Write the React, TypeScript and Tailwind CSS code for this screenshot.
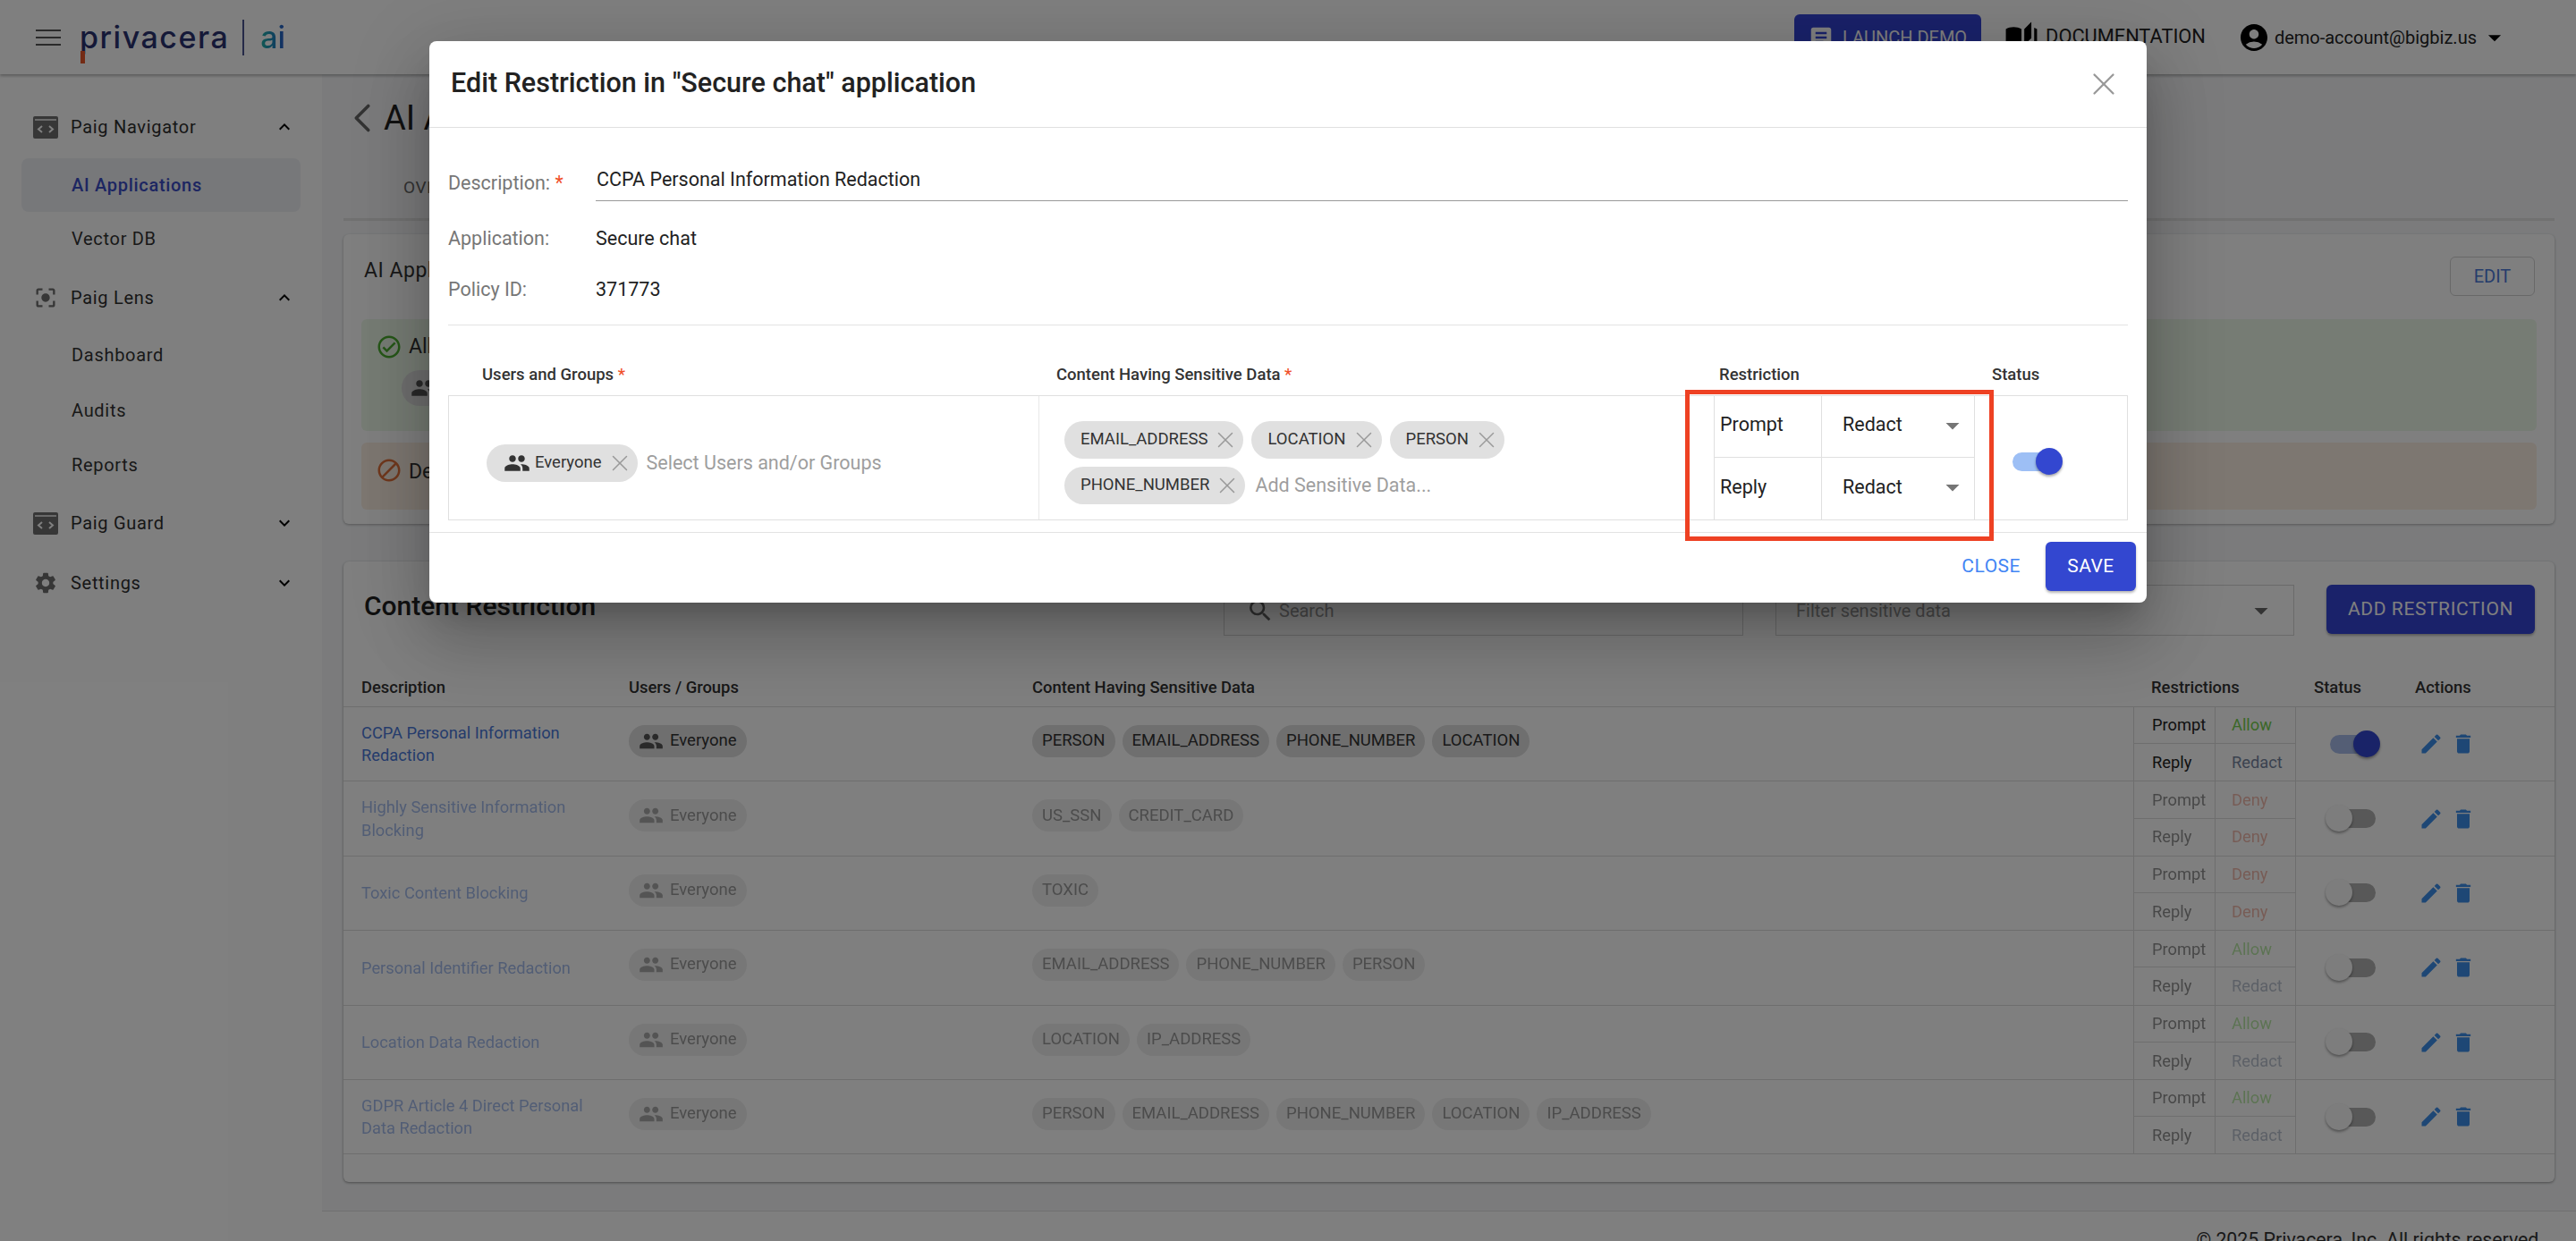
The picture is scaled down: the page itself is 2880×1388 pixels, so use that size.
import { ChevronLeft, X } from "lucide-react";
import {
  MdAccountCircle,
  MdArrowDropDown,
  MdArticle,
  MdAutoStories,
  MdBlock,
  MdCenterFocusStrong,
  MdDelete,
  MdEdit,
  MdExpandLess,
  MdExpandMore,
  MdOutlineCheckCircle,
  MdPeople,
  MdSearch,
  MdSettings,
} from "react-icons/md";

type Policy = {
  name: string[];
  tags: string[];
  prompt: string;
  reply: string;
  on?: boolean;
};

const POLICIES: Policy[] = [
  { name: ["CCPA Personal Information", "Redaction"], tags: ["PERSON", "EMAIL_ADDRESS", "PHONE_NUMBER", "LOCATION"], prompt: "Allow", reply: "Redact", on: true },
  { name: ["Highly Sensitive Information", "Blocking"], tags: ["US_SSN", "CREDIT_CARD"], prompt: "Deny", reply: "Deny" },
  { name: ["Toxic Content Blocking"], tags: ["TOXIC"], prompt: "Deny", reply: "Deny" },
  { name: ["Personal Identifier Redaction"], tags: ["EMAIL_ADDRESS", "PHONE_NUMBER", "PERSON"], prompt: "Allow", reply: "Redact" },
  { name: ["Location Data Redaction"], tags: ["LOCATION", "IP_ADDRESS"], prompt: "Allow", reply: "Redact" },
  { name: ["GDPR Article 4 Direct Personal", "Data Redaction"], tags: ["PERSON", "EMAIL_ADDRESS", "PHONE_NUMBER", "LOCATION", "IP_ADDRESS"], prompt: "Allow", reply: "Redact" },
];

function verdictColor(v: string) {
  if (v === "Allow") return "text-[#76d050]";
  if (v === "Deny") return "text-[#e0735a]";
  return "text-[#76859f]";
}

function CodeWindow() {
  return (
    <svg width="28" height="25" viewBox="0 0 28 25" className="shrink-0">
      <rect width="28" height="25" rx="2" fill="#6e6e6e" />
      <rect x="2" y="3" width="24" height="2" fill="#fff" opacity="0.7" />
      <path d="M10 11l-4 3.500 4 3.500M18 11l4 3.500-4 3.500" fill="none" stroke="#fff" strokeWidth="2" />
    </svg>
  );
}

function NavHeader({ icon, label, open }: { icon: React.ReactNode; label: string; open: boolean }) {
  return (
    <div className="flex w-full items-center pl-[37px] pr-[30px]">
      <div className="flex w-[42px] justify-start">{icon}</div>
      <span className="flex-1 text-[20px] tracking-[0.7px] text-[#2e2e2e]">{label}</span>
      {open ? <MdExpandLess size={24} className="text-black" /> : <MdExpandMore size={24} className="text-black" />}
    </div>
  );
}

function Sidebar() {
  return (
    <aside className="w-[360px] shrink-0 bg-white text-[20px] tracking-[0.7px] text-[#333]">
      <div className="h-[44px]" />
      <div className="flex h-[30px] items-center">
        <NavHeader icon={<CodeWindow />} label="Paig Navigator" open />
      </div>
      <div className="mx-[24px] mt-[20px] flex h-[60px] items-center rounded-[8px] bg-[#eff1f5] pl-[56px] font-medium text-[#3a4cc4]">AI Applications</div>
      <div className="flex h-[60px] items-center pl-[80px]">Vector DB</div>
      <div className="mt-[21px] flex h-[30px] items-center">
        <NavHeader icon={<MdCenterFocusStrong size={28} className="text-[#6e6e6e]" />} label="Paig Lens" open />
      </div>
      <div className="mt-[19px] flex h-[60px] items-center pl-[80px]">Dashboard</div>
      <div className="mt-[2px] flex h-[60px] items-center pl-[80px]">Audits</div>
      <div className="mt-[1px] flex h-[60px] items-center pl-[80px]">Reports</div>
      <div className="mt-[20px] flex h-[30px] items-center">
        <NavHeader icon={<CodeWindow />} label="Paig Guard" open={false} />
      </div>
      <div className="mt-[37px] flex h-[30px] items-center">
        <NavHeader icon={<MdSettings size={28} className="text-[#6e6e6e]" />} label="Settings" open={false} />
      </div>
    </aside>
  );
}

function TopBar() {
  return (
    <header className="relative z-10 flex h-[83px] shrink-0 items-center bg-white pl-[40px] pr-[74px] shadow-[0_2px_3px_rgba(0,0,0,0.28)]">
      <div className="flex w-[28px] flex-col gap-[6px]">
        <span className="h-[2px] bg-[#555]" />
        <span className="h-[2px] bg-[#555]" />
        <span className="h-[2px] bg-[#555]" />
      </div>
      <div className="relative ml-[21px] flex items-center">
        <span className="font-['Inter',sans-serif] text-[34px] font-medium leading-none tracking-[1.5px] text-[#2a3270]">privacera</span>
        <span className="absolute bottom-[-9px] left-[1px] h-[14px] w-[5px] bg-[#e8562a]" />
        <span className="ml-[15px] h-[40px] w-[2px] bg-[#4a5590]" />
        <span className="ml-[18px] bg-gradient-to-r from-[#25b5a5] to-[#2a55c8] bg-clip-text font-['Inter',sans-serif] text-[34px] font-medium leading-none text-transparent">ai</span>
      </div>
      <div className="ml-auto flex items-center">
        <div className="flex h-[52px] w-[209px] items-center gap-[9px] rounded-[6px] bg-[#3444d4] pl-[15px] text-[20px] text-white">
          <MdArticle size={30} className="text-white" />
          LAUNCH DEMO
        </div>
        <div className="ml-[26px] flex items-center gap-[8px] text-[21.800px] text-[#222]">
          <MdAutoStories size={38} className="text-black" />
          DOCUMENTATION
        </div>
        <div className="ml-[36px] flex items-center text-[20px] text-[#222]">
          <MdAccountCircle size={36} className="text-black" />
          <span className="ml-[5px]">demo-account@bigbiz.us</span>
          <MdArrowDropDown size={34} className="ml-[3px] text-black" />
        </div>
      </div>
    </header>
  );
}

function SmallChip({ label, people }: { label: string; people?: boolean }) {
  return (
    <span className="inline-flex h-[36px] items-center rounded-full bg-[#dedede] px-[11px] text-[18.500px] text-[#333]">
      {people ? <MdPeople size={28} className="mr-[7px] text-[#555]" /> : null}
      {label}
    </span>
  );
}

function PolicyRow({ policy }: { policy: Policy }) {
  const fade = policy.on ? "" : "opacity-50";
  return (
    <div className="grid h-[83.400px] grid-cols-[299px_451px_1251px_92px_90px_289px] border-b border-[#dcdcdc] text-[18.300px]">
      <div className={`flex flex-col justify-center pl-[20px] leading-[25.500px] text-[#4a78d8] ${fade}`}>
        {policy.name.map((line) => (
          <span key={line}>{line}</span>
        ))}
      </div>
      <div className={`pl-[20px] pt-[20px] ${fade}`}>
        <SmallChip label="Everyone" people />
      </div>
      <div className={`flex gap-[8px] pl-[20px] pt-[20px] ${fade}`}>
        {policy.tags.map((t) => (
          <SmallChip key={t} label={t} />
        ))}
      </div>
      <div className="grid grid-rows-2 border-x border-[#dcdcdc] text-[#222]">
        <div className="flex items-center border-b border-[#dcdcdc] pl-[20px]">
          <span className={fade}>Prompt</span>
        </div>
        <div className="flex items-center pl-[20px]">
          <span className={fade}>Reply</span>
        </div>
      </div>
      <div className="grid grid-rows-2 border-r border-[#dcdcdc]">
        <div className="flex items-center border-b border-[#dcdcdc] pl-[18px]">
          <span className={`${verdictColor(policy.prompt)} ${fade}`}>{policy.prompt}</span>
        </div>
        <div className="flex items-center pl-[18px]">
          <span className={`${verdictColor(policy.reply)} ${fade}`}>{policy.reply}</span>
        </div>
      </div>
      <div className="flex items-center pl-[38px]">
        <Toggle on={policy.on} />
        <MdEdit size={28} className="ml-[48px] text-[#3d8eea]" />
        <MdDelete size={28} className="ml-[8px] text-[#3d8eea]" />
      </div>
    </div>
  );
}

function Toggle({ on, active }: { on?: boolean; active?: boolean }) {
  return (
    <div className="relative h-[21px] w-[51px] shrink-0">
      <div className={`h-full w-full rounded-full ${on ? (active ? "bg-[#9dbff5]" : "bg-[#a9bdea]") : "bg-[#b0b0b0]"}`} />
      <div
        className={`absolute top-[-5px] h-[30px] w-[30px] rounded-full shadow-[0_2px_3px_rgba(0,0,0,0.35)] ${
          on ? "right-[-5px] bg-[#3347d0]" : "left-[-5px] bg-[#fafafa]"
        }`}
      />
    </div>
  );
}

function Main() {
  return (
    <main className="flex min-w-0 flex-1 flex-col bg-[#f6f7f9] pl-[24px] pr-[24px]">
      <div className="flex h-[96px] items-center pt-[2px]">
        <ChevronLeft size={54} strokeWidth={1.6} className="ml-[-6px] text-[#666]" />
        <span className="ml-[-3px] text-[38px] leading-none text-[#222]">AI Applications</span>
      </div>
      <div className="flex h-[68px] items-center border-b-[3px] border-[#e2e2e2] pb-[2px] pl-[67px] text-[19px] tracking-[0.6px] text-[#666]">OVERVIEW</div>
      <section className="mt-[15px] h-[324px] rounded-[6px] bg-white px-[20px] shadow-[0_1px_3px_rgba(0,0,0,0.3)]">
        <div className="flex h-[94px] items-center justify-between">
          <span className="ml-[3px] mt-[-12px] text-[23px] tracking-[0.5px] text-[#333]">AI Application Permissions</span>
          <span className="mr-[2px] flex h-[44px] w-[95px] items-center justify-center rounded-[6px] border border-[#d0d0d0] text-[20px] text-[#4a78d8]">EDIT</span>
        </div>
        <div className="mt-[1px] h-[125px] rounded-[6px] bg-[#ecf8e9] pl-[16px] pt-[14px]">
          <div className="flex items-center gap-[7px] text-[23px] text-[#333]">
            <MdOutlineCheckCircle size={30} className="text-[#4caf30]" />
            Allowed
          </div>
          <div className="ml-[29px] mt-[8px] inline-flex h-[40px] items-center rounded-full bg-[#dedede] px-[10px]">
            <MdPeople size={30} className="text-[#555]" />
          </div>
        </div>
        <div className="mt-[13px] flex h-[75px] items-start gap-[7px] rounded-[6px] bg-[#fbeee2] pl-[16px] pt-[16px] text-[23px] text-[#333]">
          <MdBlock size={30} className="text-[#e0703a]" />
          Denied
        </div>
      </section>
      <section className="mt-[42px] h-[694px] shrink-0 rounded-[6px] bg-white shadow-[0_1px_3px_rgba(0,0,0,0.4)]">
        <div className="flex h-[139px] items-start justify-between pl-[23px] pr-[22px] pt-[26px]">
          <h2 className="mt-[4px] text-[30px] font-medium leading-[40px] text-[#222]">Content Restriction</h2>
          <div className="flex">
            <div className="flex h-[57px] w-[581px] items-center border border-[#d5d5d5] pl-[24px] text-[20px] text-[#999]">
              <MdSearch size={32} className="mr-[5px] text-[#666]" />
              Search
            </div>
            <div className="ml-[36px] flex h-[57px] w-[580px] items-center justify-between border border-[#d5d5d5] pl-[22px] pr-[18px] text-[20px] text-[#999]">
              Filter sensitive data
              <MdArrowDropDown size={36} className="text-[#666]" />
            </div>
            <div className="ml-[36px] flex h-[55px] w-[233px] items-center justify-center rounded-[6px] bg-[#3444d4] text-[21px] tracking-[0.6px] text-white shadow-[0_2px_3px_rgba(0,0,0,0.3)]">ADD RESTRICTION</div>
          </div>
        </div>
        <div className="grid h-[23px] grid-cols-[299px_451px_1251px_92px_90px_113px_111px] pt-[2px] text-[18.400px] font-medium leading-[0px] text-[#333] [&>span]:pl-[20px]">
          <span>Description</span>
          <span>Users / Groups</span>
          <span>Content Having Sensitive Data</span>
          <span className="col-span-2">Restrictions</span>
          <span>Status</span>
          <span>Actions</span>
        </div>
        <div className="border-b border-[#dcdcdc]" />
        {POLICIES.map((p) => (
          <PolicyRow key={p.name[0]} policy={p} />
        ))}
      </section>
      <div className="h-[32px] shrink-0" />
    </main>
  );
}

function ModalChip({ label, people }: { label: string; people?: boolean }) {
  return (
    <span className={`inline-flex h-[42px] items-center rounded-full bg-[#e0e0e0] pr-[5px] text-[18.500px] text-[#333] ${people ? "pl-[19px]" : "pl-[18px]"}`}>
      {people ? <MdPeople size={30} className="mr-[5px] text-[#333]" /> : null}
      {label}
      <X size={30} strokeWidth={1.2} className="ml-[5px] text-[#999]" />
    </span>
  );
}

function Star() {
  return <span className="text-[#f0502a]"> *</span>;
}

function Dialog() {
  return (
    <div className="absolute inset-0 z-20 flex justify-center bg-black/50 pt-[46px]">
      <div className="flex h-[628px] w-[1920px] flex-col rounded-[8px] bg-white shadow-[0_20px_28px_-12px_rgba(0,0,0,0.2),0_44px_70px_6px_rgba(0,0,0,0.14),0_16px_84px_14px_rgba(0,0,0,0.12)]">
        <div className="flex h-[97px] shrink-0 items-center justify-between border-b border-[#e0e0e0] pl-[24px] pr-[27px]">
          <h1 className="mt-[-2px] text-[30.500px] font-medium text-[#222]">Edit Restriction in "Secure chat" application</h1>
          <X size={42} strokeWidth={1.3} className="text-[#999]" />
        </div>
        <div className="px-[21px] text-[21.500px] text-[#222]">
          <div className="mt-[37px] flex h-[45px]">
            <span className="w-[165px] pt-[9px] text-[#777]">Description:<span className="text-[#f0502a]"> *</span></span>
            <div className="flex-1 border-b border-[#999] pl-[1px] pt-[5px]">CCPA Personal Information Redaction</div>
          </div>
          <div className="mt-[27px] flex h-[30px] items-center">
            <span className="w-[165px] text-[#777]">Application:</span>
            <span>Secure chat</span>
          </div>
          <div className="mt-[27px] flex h-[30px] items-center">
            <span className="w-[165px] text-[#777]">Policy ID:</span>
            <span>371773</span>
          </div>
          <div className="mt-[24px] border-b border-[#e3e3e3]" />
          <div className="grid h-[78px] grid-cols-[660px_754px_292px_171px] items-center pt-[34px] text-[18.500px] font-medium text-[#333]">
            <span className="pl-[38px]">Users and Groups<Star /></span>
            <span className="pl-[20px]">Content Having Sensitive Data<Star /></span>
            <span className="pl-[7px]">Restriction</span>
            <span className="pl-[20px]">Status</span>
          </div>
          <div className="grid h-[140px] grid-cols-[660px_754px_121px_171px_171px] border border-[#e0e0e0]">
            <div className="flex items-center border-r border-[#e8e8e8] pl-[42px] pt-[12px]">
              <ModalChip label="Everyone" people />
              <span className="ml-[10px] text-[#9e9e9e]">Select Users and/or Groups</span>
            </div>
            <div className="flex flex-col justify-center gap-[9px] pl-[28px] pt-[11px]">
              <div className="flex gap-[9px]">
                <ModalChip label="EMAIL_ADDRESS" />
                <ModalChip label="LOCATION" />
                <ModalChip label="PERSON" />
              </div>
              <div className="flex items-center">
                <ModalChip label="PHONE_NUMBER" />
                <span className="ml-[11px] text-[#9e9e9e]">Add Sensitive Data...</span>
              </div>
            </div>
            <div className="grid grid-rows-2 border-x border-[#e0e0e0]">
              <div className="flex items-center border-b border-[#e0e0e0] pb-[3px] pl-[6px]">Prompt</div>
              <div className="flex items-center pb-[3px] pl-[6px]">Reply</div>
            </div>
            <div className="grid grid-rows-2 border-r border-[#e0e0e0]">
              <div className="flex items-center justify-between border-b border-[#e0e0e0] pb-[3px] pl-[23px] pr-[6px]">
                Redact
                <MdArrowDropDown size={36} className="text-[#757575]" />
              </div>
              <div className="flex items-center justify-between pb-[3px] pl-[23px] pr-[6px]">
                Redact
                <MdArrowDropDown size={36} className="text-[#757575]" />
              </div>
            </div>
            <div className="flex items-center pl-[42px] pt-[8px]">
              <Toggle on active />
            </div>
          </div>
        </div>
        <div className="mt-[13px] border-b border-[#e3e3e3]" />
        <div className="flex items-center justify-end pr-[12px] pt-[10px]">
          <span className="text-[21px] tracking-[0.5px] text-[#4285f4]">CLOSE</span>
          <span className="ml-[28px] flex h-[55px] w-[101px] items-center justify-center rounded-[6px] bg-[#3347d0] text-[21px] tracking-[0.5px] text-white shadow-[0_2px_3px_rgba(0,0,0,0.3)]">SAVE</span>
        </div>
      </div>
      <div className="pointer-events-none absolute left-[1884px] top-[436px] h-[169px] w-[345px] border-[5px] border-[#ee4123]" />
    </div>
  );
}

export default function App() {
  return (
    <div className="relative flex h-[1388px] w-full flex-col overflow-hidden bg-white font-['Roboto',sans-serif]">
      <TopBar />
      <div className="flex min-h-0 flex-1">
        <Sidebar />
        <div className="flex min-w-0 flex-1 flex-col">
          <Main />
          <footer className="flex shrink-0 justify-end border-t border-[#e3e3e3] bg-white pr-[36px] pt-[16px] text-[21.300px] text-[#333]">© 2025 Privacera, Inc. All rights reserved.</footer>
        </div>
      </div>
      <Dialog />
    </div>
  );
}
